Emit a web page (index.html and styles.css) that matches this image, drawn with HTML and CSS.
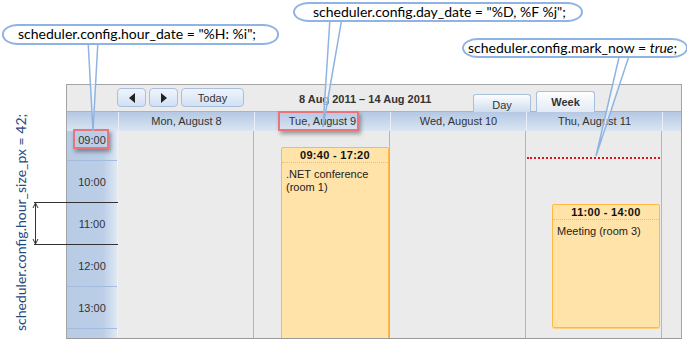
FILE: index.html
```html
<!DOCTYPE html>
<html lang="en">
<head>
    <meta charset="UTF-8">
    <title>Scheduler config</title>
    <link rel="stylesheet" href="styles.css">
</head>
<body>
    <div class="page">
        <div class="scheduler">
            <div class="navline">
                <div class="nav-buttons">
                    <button class="nav-btn arrow"><span class="tri-left"></span></button>
                    <button class="nav-btn arrow"><span class="tri-right"></span></button>
                    <button class="nav-btn today">Today</button>
                </div>
                <div class="cal-date">8 Aug 2011 &ndash; 14 Aug 2011</div>
                <div class="tabs">
                    <div class="tab">Day</div>
                    <div class="tab active">Week</div>
                </div>
            </div>

            <div class="header">
                <div class="hcell time-h"></div>
                <div class="hcell">Mon, August 8</div>
                <div class="hcell">Tue, August 9</div>
                <div class="hcell">Wed, August 10</div>
                <div class="hcell">Thu, August 11</div>
                <div class="hcell scroll-h"></div>
            </div>

            <div class="body">
                <div class="time-col">
                    <div class="time-scroll">
                        <div class="hour">09:00</div>
                        <div class="hour">10:00</div>
                        <div class="hour">11:00</div>
                        <div class="hour">12:00</div>
                        <div class="hour">13:00</div>
                    </div>
                </div>
                <div class="day-col"></div>
                <div class="day-col">
                    <div class="event" style="top: 16px; height: 200px; left: 27px;">
                        <div class="event-head">09:40 - 17:20</div>
                        <div class="event-text">.NET conference (room 1)</div>
                    </div>
                </div>
                <div class="day-col"></div>
                <div class="day-col">
                    <div class="now-line" style="top: 26px;"></div>
                    <div class="event" style="top: 73px; height: 124px; left: 26px;">
                        <div class="event-head">11:00 - 14:00</div>
                        <div class="event-text">Meeting (room 3)</div>
                    </div>
                </div>
                <div class="scroll-fill"></div>
            </div>
        </div>
    </div>

    <!-- annotations -->
    <div class="mark mark-hour"></div>
    <div class="mark mark-day"></div>

    <svg class="tails" width="687" height="339" viewBox="0 0 687 339">
        <polygon points="88,40 98,40 93,131" />
        <polygon points="330,18 342,18 323,127" />
        <polygon points="620,53 630,53 596,156" />
        <g class="dim">
            <line x1="34" y1="202.5" x2="118" y2="202.5" />
            <line x1="34" y1="244.5" x2="118" y2="244.5" />
            <line x1="35.5" y1="203" x2="35.5" y2="244" />
            <polyline points="33,208 35.5,203 38,208" />
            <polyline points="33,239 35.5,244 38,239" />
        </g>
    </svg>

    <div class="callout c-hour">scheduler.config.hour_date = "%H: %i";</div>
    <div class="callout c-day">scheduler.config.day_date = "%D, %F %j";</div>
    <div class="callout c-now">scheduler.config.mark_now = <i>true</i>;</div>
    <div class="vlabel">scheduler.config.hour_size_px = 42;</div>
</body>
</html>
```

FILE: styles.css
```css
body {
    margin: 0;
    width: 687px;
    height: 339px;
    position: relative;
    overflow: hidden;
    background: #fff;
    font-family: "Liberation Sans", Arial, sans-serif;
    font-size: 11px;
    color: #333;
}

.page {
    padding: 84px 0 0 66px;
}

.scheduler {
    width: 616px;
    height: 255px;
    box-sizing: border-box;
    border: 1px solid #a4a4a4;
    border-bottom: 1px solid #9a9a9a;
    background: #ebebeb;
}

/* nav line */
.navline {
    height: 26px;
    display: flex;
    align-items: flex-start;
}

.nav-buttons {
    display: flex;
    gap: 3px;
    margin: 3px 0 0 50px;
}

.nav-btn {
    height: 19px;
    box-sizing: border-box;
    border: 1px solid #a8bfdd;
    border-radius: 4px;
    background: linear-gradient(#eef4fc, #d3e1f3);
    font-family: "Liberation Sans", Arial, sans-serif;
    font-size: 11px;
    color: #333;
    padding: 0;
    display: flex;
    align-items: center;
    justify-content: center;
}

.nav-btn.arrow {
    width: 29px;
}

.nav-btn.today {
    width: 63px;
}

.tri-left,
.tri-right {
    width: 0;
    height: 0;
    border-top: 5px solid transparent;
    border-bottom: 5px solid transparent;
}

.tri-left {
    border-right: 6px solid #222;
}

.tri-right {
    border-left: 6px solid #222;
}

.cal-date {
    width: 174px;
    margin: 8px 0 0 55px;
    font-weight: bold;
    color: #333;
}

.tabs {
    display: flex;
    align-items: flex-end;
    gap: 5px;
    height: 27px;
}

.tab {
    width: 58px;
    height: 18px;
    box-sizing: border-box;
    border: 1px solid #a9bfdc;
    border-bottom: none;
    border-radius: 3px 3px 0 0;
    background: linear-gradient(#fbfdff, #cfdcee);
    text-align: center;
    padding-top: 4px;
}

.tab.active {
    width: 59px;
    height: 21px;
    background: linear-gradient(#fdfeff, #e2eaf5);
    font-weight: bold;
    padding-top: 4px;
}

/* header */
.header {
    height: 20px;
    box-sizing: border-box;
    border-top: 1px solid #9db6d8;
    display: flex;
    background: linear-gradient(#b4c8e4, #dbe5f2);
}

.hcell {
    width: 136px;
    box-sizing: border-box;
    border-left: 1px solid #e9eff8;
    text-align: center;
    line-height: 18px;
    color: #333;
}

.hcell.time-h {
    width: 51px;
    border-left: none;
}

.hcell.scroll-h {
    width: 19px;
}

/* body */
.body {
    height: 207px;
    display: flex;
}

.time-col {
    width: 51px;
    overflow: hidden;
    background: linear-gradient(90deg, #b8cbe5 0, #bccee7 72%, #dfe8f4 100%);
    border-right: 1px solid #eef2f8;
    box-sizing: border-box;
}

.time-scroll {
    margin-top: -12px;
}

.hour {
    height: 42px;
    box-sizing: border-box;
    border-bottom: 1px solid #a3bbdc;
    display: flex;
    align-items: center;
    justify-content: center;
    font-size: 11px;
    color: #333;
}

.day-col {
    width: 136px;
    box-sizing: border-box;
    border-right: 1px solid #a9b9cd;
    position: relative;
    overflow: hidden;
}

.scroll-fill {
    flex: 1;
}

.event {
    position: absolute;
    width: 108px;
    box-sizing: border-box;
    border: 1px solid #ffb943;
    border-radius: 2px;
    background: #ffe3a8;
    color: #111;
    box-shadow: 0 2px 0 -1px #ffcf80;
}

.event-head {
    height: 14px;
    border-bottom: 1px dotted #ffb943;
    text-align: center;
    font-weight: bold;
    line-height: 14px;
    letter-spacing: 0.3px;
}

.event-text {
    padding: 5px 4px;
    line-height: 13px;
    color: #222;
}

.now-line {
    position: absolute;
    left: 1px;
    right: 1px;
    border-top: 2px dotted #e5101a;
}

/* annotations */
.mark {
    position: absolute;
    border: 2px solid #e9747e;
    box-shadow: 2px 3px 4px rgba(0, 0, 0, 0.35);
}

.mark-hour {
    left: 73px;
    top: 129px;
    width: 32px;
    height: 16px;
}

.mark-day {
    left: 278px;
    top: 111px;
    width: 77px;
    height: 16px;
}

.tails {
    position: absolute;
    left: 0;
    top: 0;
}

.tails polygon {
    fill: rgba(255, 255, 255, 0.55);
    stroke: #8fb4e3;
    stroke-width: 1.5;
}

.tails .dim line,
.tails .dim polyline {
    stroke: #333;
    stroke-width: 1;
    fill: none;
}

.callout {
    position: absolute;
    height: 20px;
    box-sizing: border-box;
    border: 2px solid #8fb4e3;
    border-radius: 16px / 10px;
    background: #fff;
    font-family: Lato, "Open Sans", sans-serif;
    font-size: 14px;
    line-height: 16px;
    color: #000;
    white-space: nowrap;
}

.c-hour {
    left: 2px;
    top: 24px;
    width: 277px;
    height: 21px;
    padding-left: 14px;
}

.c-day {
    left: 293px;
    top: 2px;
    width: 290px;
    padding-left: 18px;
}

.c-now {
    left: 462px;
    top: 38px;
    width: 226px;
    padding-left: 4px;
}

.vlabel {
    position: absolute;
    left: 12px;
    top: 119px;
    height: 212px;
    writing-mode: vertical-rl;
    transform: rotate(180deg);
    font-family: Lato, "Open Sans", sans-serif;
    font-size: 14px;
    color: #1f4a7e;
    white-space: nowrap;
}
```
